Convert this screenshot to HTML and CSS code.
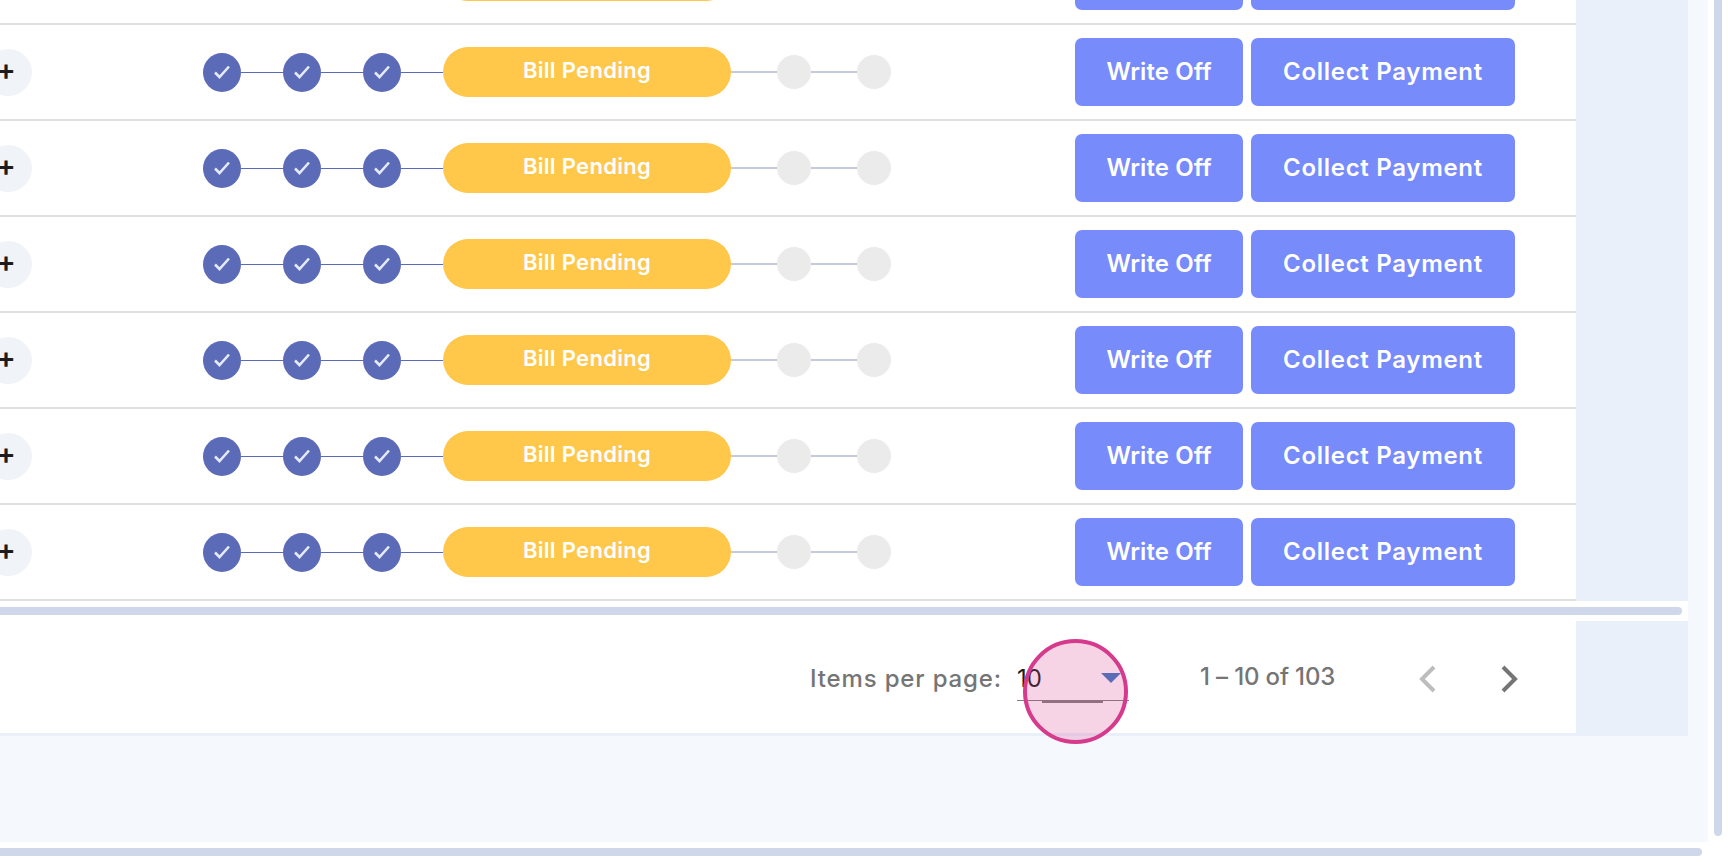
FILE: index.html
```html
<!DOCTYPE html>
<html lang="en">
<head>
    <meta charset="UTF-8">
    <meta name="viewport" content="width=device-width, initial-scale=1.0">
    <title>Billing</title>
    <link rel="stylesheet" href="styles.css">
</head>
<body>
    <div class="window">
        <div class="page">
            <div class="card">
                <div class="table-wrap">
                    <div class="table" id="rows"></div>
                    <div class="gutter"></div>
                </div>
                <div class="inner-scroll">
                    <div class="scroll-thumb"></div>
                </div>
                <div class="footer-wrap">
                    <div class="paginator">
                        <span class="per-page-label">Items per page:</span>
                        <div class="per-page-select">
                            <span>10</span>
                            <span class="select-arrow"></span>
                            <span class="select-ripple"></span>
                        </div>
                        <span class="range-label">1 – 10 of 103</span>
                        <button type="button" class="page-btn page-btn-prev" aria-label="Previous page">
                            <svg width="24" height="30" viewBox="0 0 24 30"><path d="M20 3 8 15l12 12" fill="none" stroke="currentColor" stroke-width="4"/></svg>
                        </button>
                        <button type="button" class="page-btn page-btn-next" aria-label="Next page">
                            <svg width="24" height="30" viewBox="0 0 24 30"><path d="M4 3l12 12L4 27" fill="none" stroke="currentColor" stroke-width="4"/></svg>
                        </button>
                        <div class="click-marker"></div>
                    </div>
                    <div class="gutter"></div>
                </div>
            </div>
        </div>
        <div class="v-scroll"></div>
    </div>
    <div class="h-scroll"></div>

    <script>
        const rows = document.getElementById('rows');
        const check = '<svg width="18" height="14" viewBox="0 0 18 14"><path d="M2 7.5l4.5 4.5L16 1.5" fill="none" stroke="#e6e9f6" stroke-width="2.6"/></svg>';
        const done = `<span class="step step-done">${check}</span>`;

        // 7 rows, only the bottom edge of the first one is still in view
        for (let i = 0; i < 7; i++) {
            const plus = i ? '+' : '';
            const status = i ? 'Bill Pending' : '';
            const writeOff = i ? 'Write Off' : '';
            const collect = i ? 'Collect Payment' : '';

            rows.innerHTML += `
                <div class="row">
                    <button type="button" class="expand-btn">${plus}</button>
                    <div class="stepper">
                        ${done}<span class="link"></span>
                        ${done}<span class="link"></span>
                        ${done}<span class="link"></span>
                        <span class="status-pill">${status}</span>
                        <span class="link link-todo"></span>
                        <span class="step step-todo"></span>
                        <span class="link link-todo"></span>
                        <span class="step step-todo"></span>
                    </div>
                    <div class="actions">
                        <button type="button" class="btn btn-write-off">${writeOff}</button>
                        <button type="button" class="btn btn-collect">${collect}</button>
                    </div>
                </div>`;
        }
    </script>
</body>
</html>
```

FILE: styles.css
```css
* {
    margin: 0;
    padding: 0;
    box-sizing: border-box;
}

html, body {
    height: 100%;
    overflow: hidden;
}

body {
    font-family: 'Inter', 'Liberation Sans', sans-serif;
    background: white;
}

.window {
    display: flex;
    height: 848px;
}

.page {
    width: 1708px;
    height: 842px;
    background: #f5f8fd;
    overflow: hidden;
}

.card {
    width: 1688px;
}

.table-wrap {
    display: flex;
    height: 601px;
    overflow: hidden;
}

.gutter {
    flex: 1;
    background: #e9f0fa;
}

.table {
    width: 1576px;
    margin-top: -71px;
    background: white;
}

.row {
    display: flex;
    align-items: center;
    height: 96px;
    border-bottom: 2px solid #dfdfdf;
    background: white;
}

.expand-btn {
    flex: none;
    width: 47px;
    height: 47px;
    margin-left: -15px;
    padding: 0 5px 6px 0;
    border: none;
    border-radius: 50%;
    background: #f0f3f7;
    color: #1c1c1c;
    font-family: inherit;
    font-size: 29px;
    font-weight: 600;
}

.stepper {
    display: flex;
    align-items: center;
    flex: none;
    width: 688px;
    margin-left: 171px;
}

.step {
    display: flex;
    align-items: center;
    justify-content: center;
    flex: none;
    border-radius: 50%;
}

.step-done {
    width: 38px;
    height: 39px;
    background: #5c6bb8;
}

.step-todo {
    width: 34px;
    height: 34px;
    background: #ebebeb;
}

.link {
    flex: none;
    width: 42px;
    height: 1px;
    background: #5c6bb8;
}

.link-todo {
    width: 46px;
    height: 2px;
    background: #c5c9dc;
}

.status-pill {
    display: flex;
    align-items: center;
    justify-content: center;
    flex: none;
    width: 288px;
    height: 50px;
    padding-bottom: 5px;
    border-radius: 25px;
    background: #ffc84a;
    color: white;
    font-size: 22px;
    font-weight: 600;
    letter-spacing: 0.3px;
}

.actions {
    display: flex;
    gap: 8px;
    margin-left: 184px;
}

.btn {
    height: 68px;
    padding-bottom: 2px;
    border: none;
    border-radius: 7px;
    background: #788bfb;
    color: white;
    font-family: inherit;
    font-size: 24px;
    font-weight: 600;
}

.btn-write-off {
    width: 168px;
    letter-spacing: 0.1px;
}

.btn-collect {
    width: 264px;
    letter-spacing: 0.7px;
}

.inner-scroll {
    height: 20px;
    padding-top: 6px;
    background: white;
}

.scroll-thumb {
    width: 1682px;
    height: 8px;
    border-radius: 0 4px 4px 0;
    background: #cfd8eb;
}

.footer-wrap {
    display: flex;
    height: 115px;
}

.paginator {
    position: relative;
    display: flex;
    align-items: flex-start;
    width: 1576px;
    padding-top: 43px;
    border-bottom: 3px solid #e9f0fa;
    background: white;
    color: #757575;
    font-size: 24px;
    font-weight: 500;
}

.per-page-label {
    flex: none;
    width: 207px;
    margin-left: 810px;
    letter-spacing: 0.85px;
}

.per-page-select {
    position: relative;
    display: flex;
    justify-content: space-between;
    flex: none;
    width: 112px;
    height: 37px;
    padding-right: 8px;
    border-bottom: 1px solid #7f7f7f;
    color: #1c1c1c;
    font-weight: 400;
}

.select-arrow {
    position: relative;
    z-index: 1;
    width: 0;
    height: 0;
    margin-top: 9px;
    border-left: 10px solid transparent;
    border-right: 10px solid transparent;
    border-top: 10px solid #5c6bb8;
}

/* focus ripple under the select */
.select-ripple {
    position: absolute;
    left: 25px;
    bottom: -3px;
    width: 61px;
    height: 3px;
    background: #7f7f7f;
}

.range-label {
    flex: none;
    width: 214px;
    margin-top: -2px;
    margin-left: 71px;
    letter-spacing: -0.15px;
}

.page-btn {
    flex: none;
    width: 24px;
    height: 30px;
    border: none;
    background: none;
    color: #757575;
}

.page-btn-prev {
    color: #bdbdbd;
}

.page-btn-next {
    margin-left: 61px;
}

.click-marker {
    position: absolute;
    left: 1023px;
    top: 18px;
    width: 105px;
    height: 105px;
    border: 4px solid #d63a8c;
    border-radius: 50%;
    background: rgba(214, 58, 140, 0.22);
}

.v-scroll {
    flex: none;
    width: 8px;
    height: 836px;
    margin-left: 6px;
    border-radius: 0 0 4px 4px;
    background: #cfd8eb;
}

.h-scroll {
    width: 1702px;
    height: 8px;
    border-radius: 0 4px 4px 0;
    background: #cfd8eb;
}
```
